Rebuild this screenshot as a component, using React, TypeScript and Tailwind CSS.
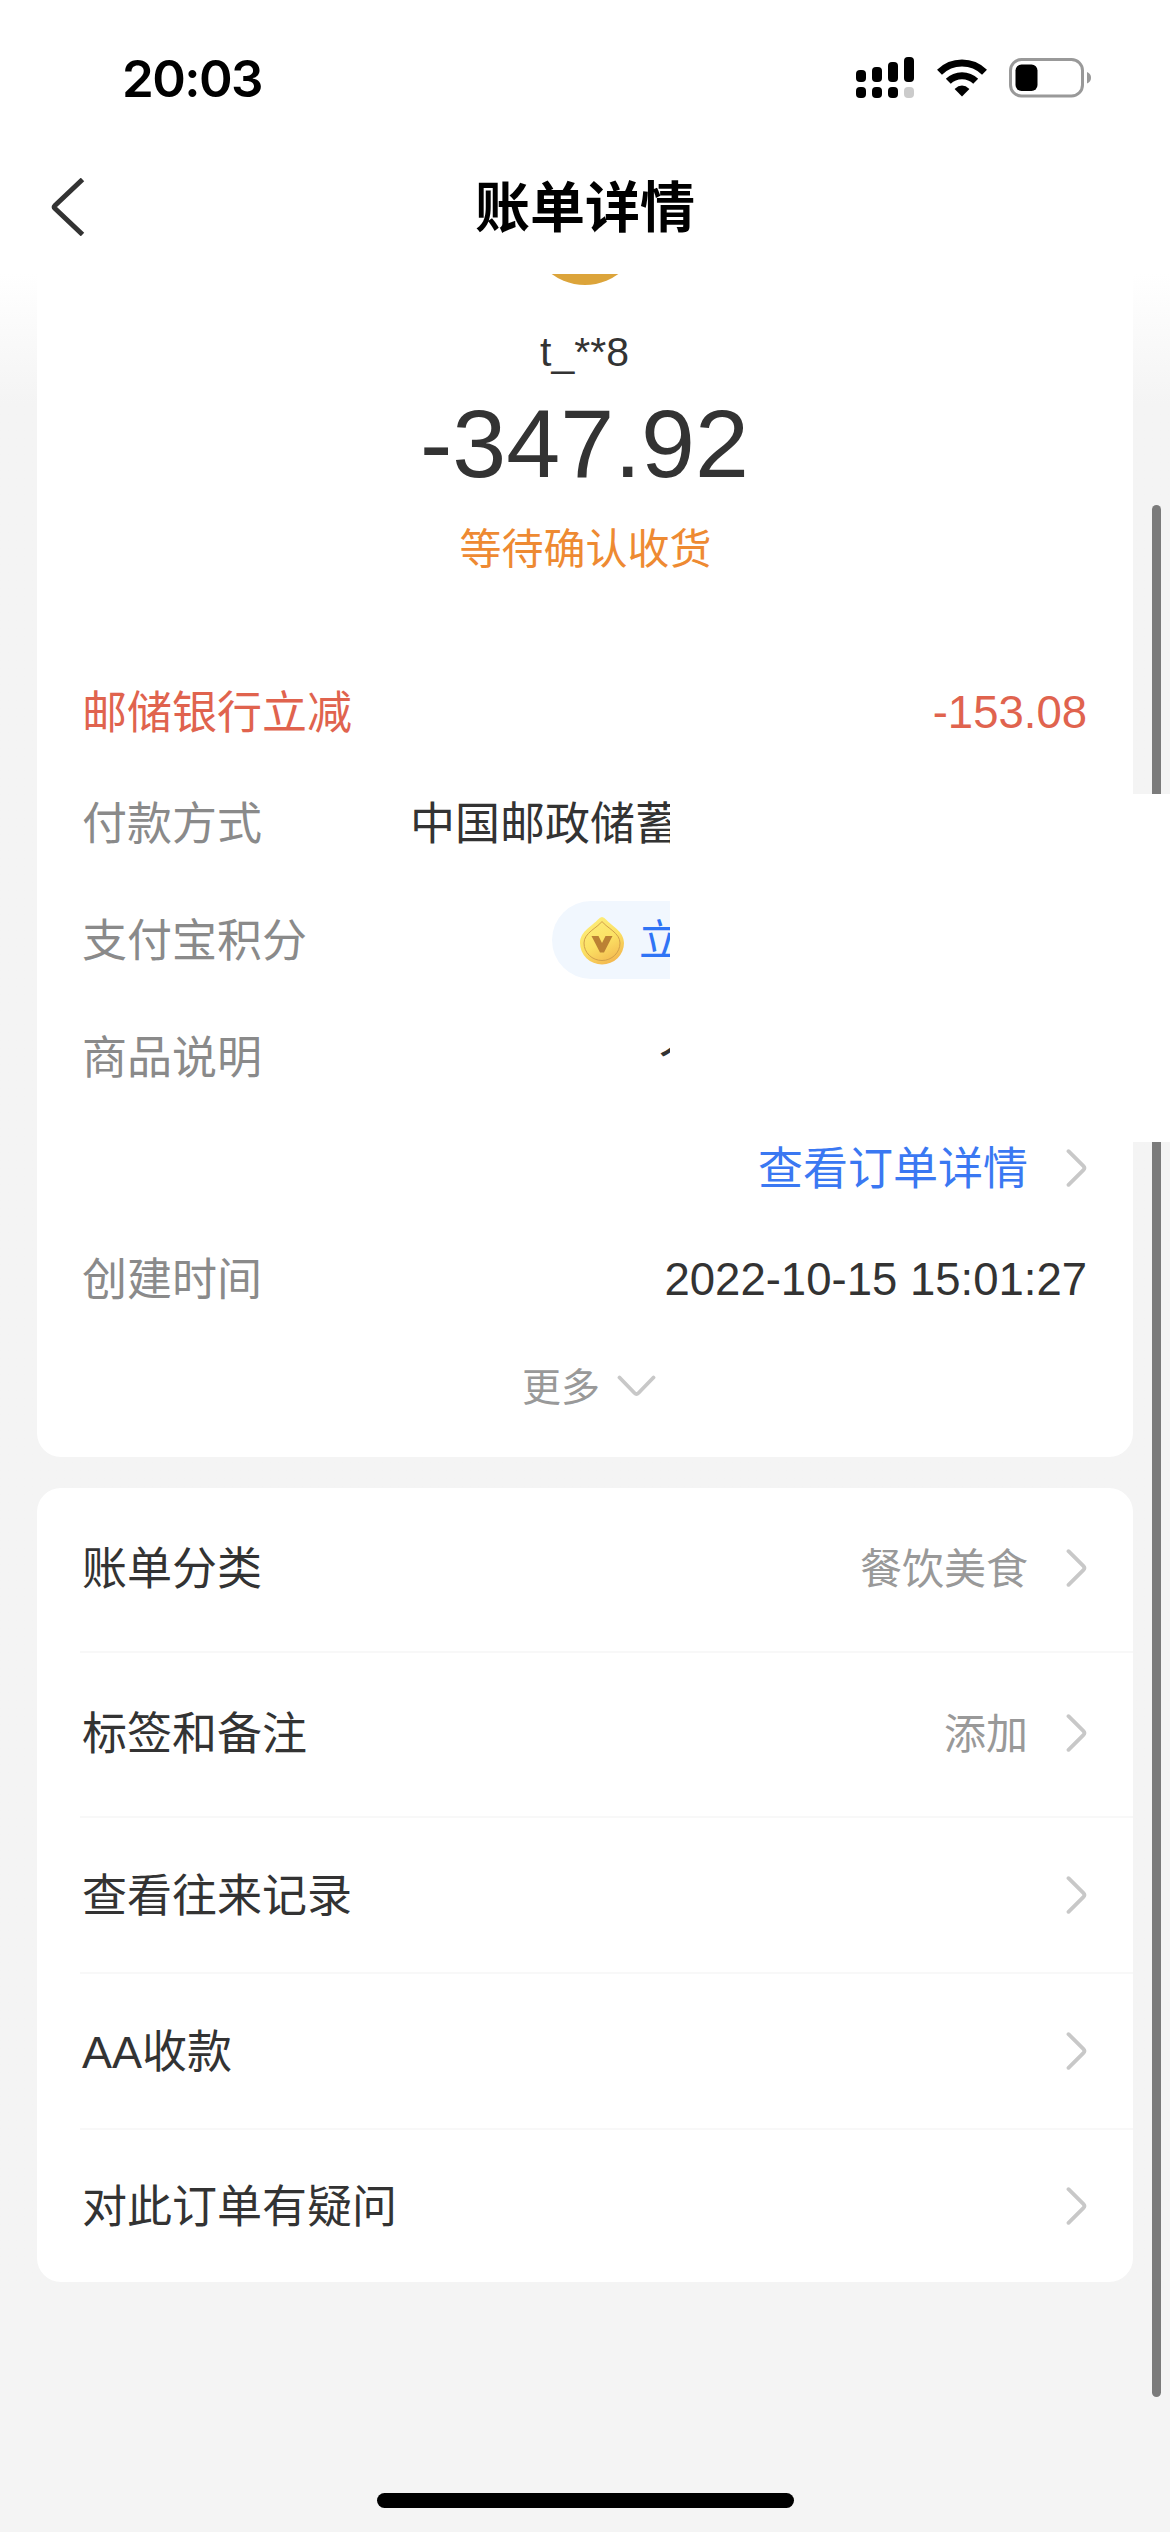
import type { ReactNode } from 'react';

const menuItems = [
  { label: '账单分类', value: '餐饮美食', size: 'h-[165px] pb-[3px]' },
  { label: '标签和备注', value: '添加', size: 'h-[165px] pb-[3px]' },
  { label: '查看往来记录', value: '', size: 'h-[156px]' },
  { label: 'AA收款', value: '', size: 'h-[156px]' },
  { label: '对此订单有疑问', value: '', size: 'h-[152px]' },
];

const ChevronRight = () => (
  <svg
    width="21"
    height="40"
    viewBox="0 0 21 40"
    fill="none"
    stroke="#c8c8c8"
    strokeWidth="3.8"
    strokeLinecap="round"
    className="shrink-0"
  >
    <path d="M2.5 3.2L17.3 17.8Q19.5 20 17.3 22.2L2.5 36.8" />
  </svg>
);

const SignalIcon = () => (
  <svg width="58" height="42" viewBox="0 0 58 42">
    <rect x="0" y="13" width="10" height="12" rx="4" />
    <rect x="16" y="10" width="10" height="15" rx="4" />
    <rect x="32" y="5" width="10" height="20" rx="4" />
    <rect x="48" y="0" width="10" height="25" rx="4" />
    <rect x="0" y="30" width="10" height="11" rx="4" />
    <rect x="16" y="30" width="10" height="11" rx="4" />
    <rect x="32" y="30" width="10" height="11" rx="4" />
    <rect x="48" y="30" width="10" height="11" rx="4" fill="#cbcbcb" />
  </svg>
);

const WifiIcon = () => (
  <svg width="50" height="38" viewBox="0 0 50 38" fill="none" stroke="#000" strokeWidth="7">
    <path d="M2.5 13.2A32 32 0 0 1 47.5 13.2" />
    <path d="M11.3 22.3A19.5 19.5 0 0 1 38.7 22.3" />
    <path d="M25 37.5L17.6 30Q25 23.2 32.4 30Z" fill="#000" stroke="none" />
  </svg>
);

const BatteryIcon = () => (
  <svg width="84" height="40" viewBox="0 0 84 40">
    <rect x="1.5" y="1.5" width="72" height="36.5" rx="11" fill="none" stroke="#999" strokeWidth="3" />
    <rect x="6.5" y="6.5" width="22" height="26.5" rx="6" fill="#000" />
    <path d="M78 14Q82 15.5 82 19.8Q82 24 78 25.6Z" fill="#999" />
  </svg>
);

const PointsCoin = () => (
  <svg width="44" height="50" viewBox="0 0 44 50">
    <defs>
      <linearGradient id="coin" x1="0.2" y1="0" x2="0.7" y2="1">
        <stop offset="0" stopColor="#fdee7c" />
        <stop offset="0.55" stopColor="#fbe063" />
        <stop offset="1" stopColor="#f3b64e" />
      </linearGradient>
    </defs>
    <path d="M22 1Q24 1 26 3.5C31 9.5 44 15 44 27A22 21.5 0 0 1 0 27C0 15 13 9.5 18 3.5Q20 1 22 1Z" fill="url(#coin)" />
    <path
      d="M22 5.5C27 12 40 17 40 27A18 17.5 0 0 1 4 27C4 17 17 12 22 5.5Z"
      fill="none"
      stroke="#d2a04a"
      strokeWidth="1"
    />
    <path d="M11.5 20H18.5L22 27L25.5 20H32.5L24 36.5H20Z" fill="#bb8134" />
  </svg>
);

const DetailRow = ({ label, size, children }: { label: string; size: string; children?: ReactNode }) => (
  <div className={`flex items-center justify-between ${size}`}>
    <span className="pt-[3px] text-[#8a8a8a]">{label}</span>
    {children}
  </div>
);

const App = () => {
  return (
    <div className="relative flex h-[2532px] w-[1170px] flex-col overflow-hidden bg-[#f4f4f4] font-['Liberation_Sans','Noto_Sans_CJK_SC',sans-serif] text-[45px] leading-none text-[#333]">
      <header className="h-[274px] shrink-0 bg-white">
        <div className="flex h-[156px] items-center justify-between pr-[77px] pl-[122px]">
          <div className="font-['Inter',sans-serif] text-[51px] font-semibold tracking-[-1.6px] text-black">20:03</div>
          <div className="flex items-center">
            <div className="w-[81px]">
              <SignalIcon />
            </div>
            <div className="w-[72px]">
              <WifiIcon />
            </div>
            <BatteryIcon />
          </div>
        </div>
        <div className="grid h-[102px] grid-cols-3 items-center px-[51px]">
          <svg width="34" height="58" viewBox="0 0 34 58" fill="none" stroke="#333" strokeWidth="5">
            <path d="M31.5 1.5L4 27.5Q2.5 29 4 30.5L31.5 56.5" />
          </svg>
          <h1 className="pt-0.5 text-center text-[55px] font-bold whitespace-nowrap text-black">账单详情</h1>
        </div>
      </header>

      <div className="flex flex-col bg-linear-to-b from-white to-[#f4f4f4] to-[130px] px-[37px]">
        <section className="h-[1183px] rounded-b-3xl bg-white pr-[46px] pl-[45px]">
          {/* merchant avatar, scrolled under the header */}
          <div className="flex h-[11px] items-end justify-center overflow-hidden">
            <div className="size-[112px] shrink-0 rounded-full bg-[#dca43a]" />
          </div>
          <div className="mt-[37px] flex h-[60px] items-center justify-center text-[41px]">t_**8</div>
          <div className="flex h-[123px] items-center justify-center text-[97px]">-347.92</div>
          <div className="flex h-[86px] items-center justify-center pt-[3px] pl-0.5 text-[42px] text-[#ee8a32]">
            等待确认收货
          </div>

          <div className="mt-[66px] flex h-[110px] items-center justify-between text-[#e0634e]">
            <span className="pt-0.5">邮储银行立减</span>
            <span className="pt-0.5 text-[45.5px]">-153.08</span>
          </div>
          <DetailRow label="付款方式" size="h-[112px]">
            <span className="w-[677px] pt-[3px]">中国邮政储蓄</span>
          </DetailRow>
          <DetailRow label="支付宝积分" size="h-[122px]">
            <div className="flex h-[78px] w-[535px] items-center gap-[15px] rounded-full bg-[#f1f7fe] pt-0.5 pl-7 text-[42px] text-[#2f74f5]">
              <PointsCoin />
              立
            </div>
          </DetailRow>
          <DetailRow label="商品说明" size="h-[112px]">
            <span className="w-[428px] pt-0.5">个</span>
          </DetailRow>
          <div className="flex h-[110px] items-center justify-end gap-[38px]">
            <span className="pt-[3px] text-[#3a78f2]">查看订单详情</span>
            <ChevronRight />
          </div>
          <DetailRow label="创建时间" size="h-[112px]">
            <span className="pt-0.5 text-[45.5px]">2022-10-15 15:01:27</span>
          </DetailRow>
          <div className="flex h-[102px] items-center justify-center gap-[17px] pl-[9px] text-[39px] text-[#999]">
            <span className="pt-0.5">更多</span>
            <svg width="39" height="22" viewBox="0 0 39 22" fill="none" stroke="#c8c8c8" strokeWidth="3.8" strokeLinecap="round">
              <path d="M2.5 2.5L17.5 18Q19.5 20 21.5 18L36.5 2.5" />
            </svg>
          </div>
        </section>

        <section className="mt-[31px] rounded-3xl bg-white pl-[43px]">
          {menuItems.map((item, i) => (
            <div
              key={item.label}
              className={`flex items-center pr-[46px] pl-0.5 ${item.size} ${
                i < menuItems.length - 1 ? 'border-b-2 border-[#f8f8f8]' : ''
              }`}
            >
              <span className="flex-1 pt-[3px]">{item.label}</span>
              <span className="mr-[38px] pt-[3px] text-[42px] text-[#999]">{item.value}</span>
              <ChevronRight />
            </div>
          ))}
        </section>
      </div>

      {/* scroll indicator */}
      <div className="absolute top-[505px] right-[9px] h-[1892px] w-[9px] rounded-full bg-[#7b7b7b]" />

      {/* blanked-out private details */}
      <div className="absolute top-[794px] left-[670px] h-[348px] w-[500px] bg-white" />

      {/* home indicator */}
      <div className="mt-auto mb-6 h-[15px] w-[417px] self-center rounded-full bg-black" />
    </div>
  );
};

export default App;
